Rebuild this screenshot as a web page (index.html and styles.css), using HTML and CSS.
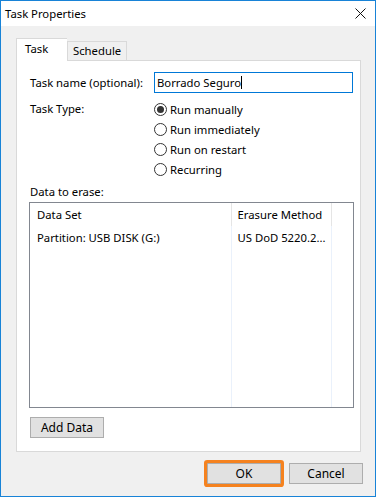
FILE: index.html
```html
<!DOCTYPE html>
<html lang="en">
<head>
    <meta charset="UTF-8">
    <title>Task Properties</title>
    <link rel="stylesheet" href="styles.css">
</head>
<body>
    <div class="window">
        <div class="titlebar">
            <span class="title">Task Properties</span>
            <svg class="close" width="11" height="11" viewBox="0 0 11 11">
                <path d="M0.5 0.5 L10.5 10.5 M10.5 0.5 L0.5 10.5" stroke="#111" stroke-width="1" fill="none"/>
            </svg>
        </div>

        <div class="content">
            <div class="tabs">
                <div class="tab active">Task</div>
                <div class="tab">Schedule</div>
            </div>

            <div class="panel">
                <div class="form-row">
                    <label>Task name (optional):</label>
                    <div class="input">Borrado Seguro<span class="caret"></span></div>
                </div>

                <div class="form-row type-row">
                    <label>Task Type:</label>
                    <div class="radios">
                        <div class="radio checked"><span class="dot"></span>Run manually</div>
                        <div class="radio"><span class="dot"></span>Run immediately</div>
                        <div class="radio"><span class="dot"></span>Run on restart</div>
                        <div class="radio"><span class="dot"></span>Recurring</div>
                    </div>
                </div>

                <div class="section-label">Data to erase:</div>
                <div class="list">
                    <table>
                        <tr class="head">
                            <td class="c1">Data Set</td>
                            <td class="c2">Erasure Method</td>
                            <td class="c3"></td>
                        </tr>
                        <tr>
                            <td class="c1">Partition: USB DISK (G:)</td>
                            <td class="c2">US DoD 5220.2...</td>
                            <td class="c3"></td>
                        </tr>
                        <tr class="filler">
                            <td class="c1"></td>
                            <td class="c2"></td>
                            <td class="c3"></td>
                        </tr>
                    </table>
                </div>

                <button class="btn add-btn">Add Data</button>
            </div>

            <div class="actions">
                <button class="btn ok">OK</button>
                <button class="btn">Cancel</button>
            </div>
        </div>
    </div>
</body>
</html>
```

FILE: styles.css
```css
* {
    margin: 0;
    padding: 0;
    box-sizing: border-box;
}

body {
    font-family: "Noto Sans", "Liberation Sans", sans-serif;
    font-size: 11.3px;
    color: #000;
    background: #f0f0f0;
}

.window {
    width: 376px;
    height: 497px;
    border: 1px solid #1883d7;
    background: #f0f0f0;
    display: flex;
    flex-direction: column;
}

.titlebar {
    height: 25px;
    background: #fff;
    display: flex;
    align-items: center;
    justify-content: space-between;
    padding: 0 9px 0 4px;
}

.title {
    line-height: 16px;
}

.content {
    padding: 12px 14px 0 15px;
}

.tabs {
    display: flex;
    align-items: flex-end;
    height: 22px;
}

.tab {
    height: 19px;
    line-height: 18px;
    padding: 0 5px;
    border: 1px solid #d9d9d9;
    border-bottom: none;
    background: #f0f0f0;
}

.tab.active {
    position: relative;
    z-index: 1;
    height: 23px;
    width: 51px;
    margin-bottom: -1px;
    padding: 0 8px;
    line-height: 20px;
    background: #fff;
    border-right: none;
}

.panel {
    height: 392px;
    background: #fff;
    border: 1px solid #d9d9d9;
    padding: 11px 7px 0 13px;
}

.form-row {
    display: grid;
    grid-template-columns: 124px 1fr;
    align-items: center;
}

.input {
    height: 21px;
    border: 1px solid #0078d7;
    padding-left: 2px;
    line-height: 19px;
    display: flex;
    align-items: center;
}

.caret {
    display: inline-block;
    width: 1px;
    height: 13px;
    background: #000;
}

.type-row {
    margin-top: 6px;
    align-items: start;
}

.type-row label {
    line-height: 20px;
}

.radio {
    height: 20px;
    display: flex;
    align-items: center;
    gap: 3px;
}

.dot {
    width: 13px;
    height: 13px;
    border: 1px solid #333;
    border-radius: 50%;
    display: flex;
    align-items: center;
    justify-content: center;
}

.radio.checked .dot::after {
    content: "";
    width: 7px;
    height: 7px;
    border-radius: 50%;
    background: #333;
}

.section-label {
    margin-top: 5px;
    line-height: 16px;
}

.list {
    margin: 2px 0 0 -1px;
    width: 325px;
    height: 206px;
    border: 1px solid #828790;
}

.list table {
    width: 100%;
    height: 100%;
    border-collapse: collapse;
    table-layout: fixed;
}

.list td {
    padding: 0 6px;
    white-space: nowrap;
    overflow: hidden;
    border-right: 1px solid #eaf1fb;
    vertical-align: middle;
}

.list .c1 {
    width: 201px;
    padding-left: 7px;
}

.list .c2 {
    width: 100px;
}

.list .c3 {
    border-right: none;
}

.list tr.head td {
    height: 23px;
    border-right-color: #e5e5e5;
}

.list tr.head td.c3 {
    border-right: none;
}

.list tr td {
    height: 22px;
}

.list tr.filler td {
    height: auto;
}

.btn {
    font-family: inherit;
    font-size: 12px;
    color: #000;
    background: #e1e1e1;
    border: 1px solid #adadad;
    width: 74px;
    height: 21px;
}

.add-btn {
    margin-top: 9px;
}

.actions {
    display: flex;
    justify-content: flex-end;
    gap: 8px;
    margin-top: 11px;
    margin-right: -2px;
}

.btn.ok {
    border-radius: 1px;
    box-shadow: 0 0 0 3px #f5821f;
}
```
